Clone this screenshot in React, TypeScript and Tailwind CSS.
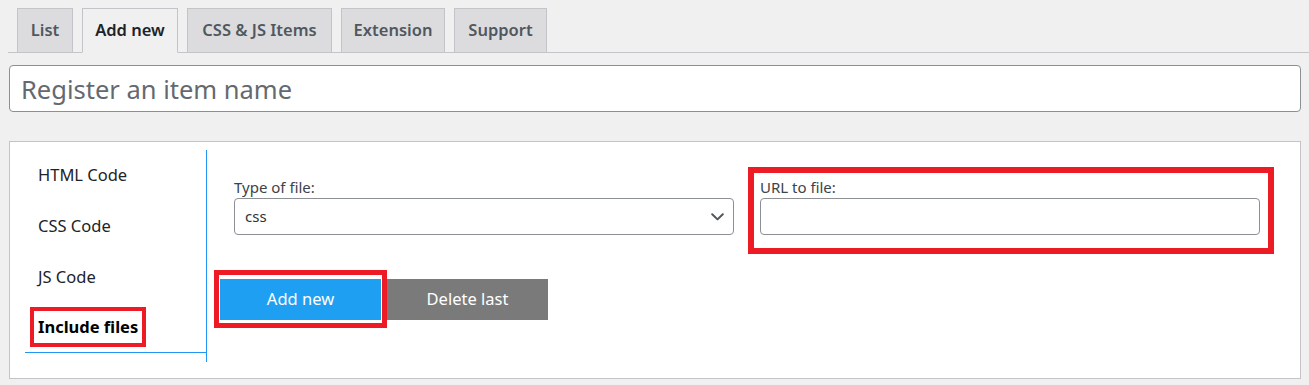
import React from "react";

const tabs = [
  { label: "List", w: "w-[56px]" },
  { label: "Add new", w: "w-[96px]", active: true },
  { label: "CSS & JS Items", w: "w-[145px]" },
  { label: "Extension", w: "w-[104px]" },
  { label: "Support", w: "w-[93px]" },
];

const sideItems = ["HTML Code", "CSS Code", "JS Code"];

function ChevronDown() {
  return (
    <svg
      className="pointer-events-none absolute right-[10px] top-[15px] w-[13px] h-[8px]"
      viewBox="0 0 13 8"
      fill="none"
    >
      <polyline
        points="1.2,1.2 6.5,6.4 11.8,1.2"
        stroke="#50575e"
        strokeWidth="2"
        strokeLinecap="round"
        strokeLinejoin="round"
      />
    </svg>
  );
}

export default function App() {
  return (
    <div className="min-h-[385px] bg-[#f0f0f1] font-['Noto_Sans',sans-serif] text-[#1d2327]">
      {/* top tabs */}
      <nav className="ml-2 pt-2 pl-[9px] flex items-end gap-[9px] border-b border-[#c3c4c7]">
        {tabs.map((t) => (
          <a
            key={t.label}
            className={`${t.w} h-[45px] -mb-px flex items-center justify-center border border-[#c3c4c7] text-[16.5px] font-semibold ${
              t.active
                ? "bg-[#f0f0f1] border-b-[#f0f0f1] text-[#1d2327]"
                : "bg-[#dcdcde] text-[#50575e]"
            }`}
          >
            {t.label}
          </a>
        ))}
      </nav>

      <div className="ml-[9px] mr-2">
        <input
          type="text"
          placeholder="Register an item name"
          className="mt-3 block w-full h-[47px] px-[11px] bg-white border border-[#8c8f94] rounded-[4px] text-[25.5px] text-[#2c3338] placeholder:text-[#646970] outline-none"
        />

        {/* editor panel */}
        <div className="mt-[29px] h-[238px] bg-white border border-[#c3c4c7] flex items-start">
          <ul className="ml-[15px] mt-2 w-[182px] pb-[9px] border-r border-[#2196f3]">
            {sideItems.map((s) => (
              <li
                key={s}
                className="h-[51px] flex items-center pl-[13px] text-[16.5px] text-[#1d2327]"
              >
                {s}
              </li>
            ))}
            <li className="h-[50px] flex items-center pl-[13px] border-b border-[#2196f3] text-[16.5px] font-bold text-black">
              <span className="relative">
                Include files
                <span className="absolute -left-[8px] -right-[8px] -top-[8px] -bottom-[7px] border-4 border-[#ed1c24]" />
              </span>
            </li>
          </ul>

          <div className="flex-1 pl-[13px] pt-[35px]">
            <div className="ml-[14px] grid grid-cols-[500px_500px] gap-x-[26px]">
              <div>
                <label className="block h-[21px] text-[15px] leading-[20px] text-[#3c434a]">
                  Type of file:
                </label>
                <div className="relative">
                  <select className="appearance-none block w-full h-[37px] pl-[10px] bg-white border border-[#8c8f94] rounded-[4px] text-[15px] text-[#2c3338] outline-none">
                    <option>css</option>
                    <option>js</option>
                  </select>
                  <ChevronDown />
                </div>
              </div>

              <div className="relative">
                <label className="block h-[21px] text-[15px] leading-[20px] text-[#3c434a]">
                  URL to file:
                </label>
                <input
                  type="text"
                  className="block w-full h-[37px] px-2 bg-white border border-[#8c8f94] rounded-[4px] outline-none"
                />
                <span className="pointer-events-none absolute -left-[12px] -right-[14px] -top-[10px] -bottom-[19px] border-[6px] border-[#ed1c24]" />
              </div>
            </div>

            <div className="mt-[44px] flex gap-[6px]">
              <div className="relative">
                <button className="w-[161px] h-[41px] bg-[#1f9ff2] text-white text-[16.5px]">
                  Add new
                </button>
                <span className="pointer-events-none absolute -left-[6px] -right-[6px] -top-[9px] -bottom-[8px] border-[5px] border-[#ed1c24]" />
              </div>
              <button className="w-[161px] h-[41px] bg-[#7a7a7a] text-white text-[16.5px]">
                Delete last
              </button>
            </div>
          </div>
        </div>
      </div>
    </div>
  );
}
